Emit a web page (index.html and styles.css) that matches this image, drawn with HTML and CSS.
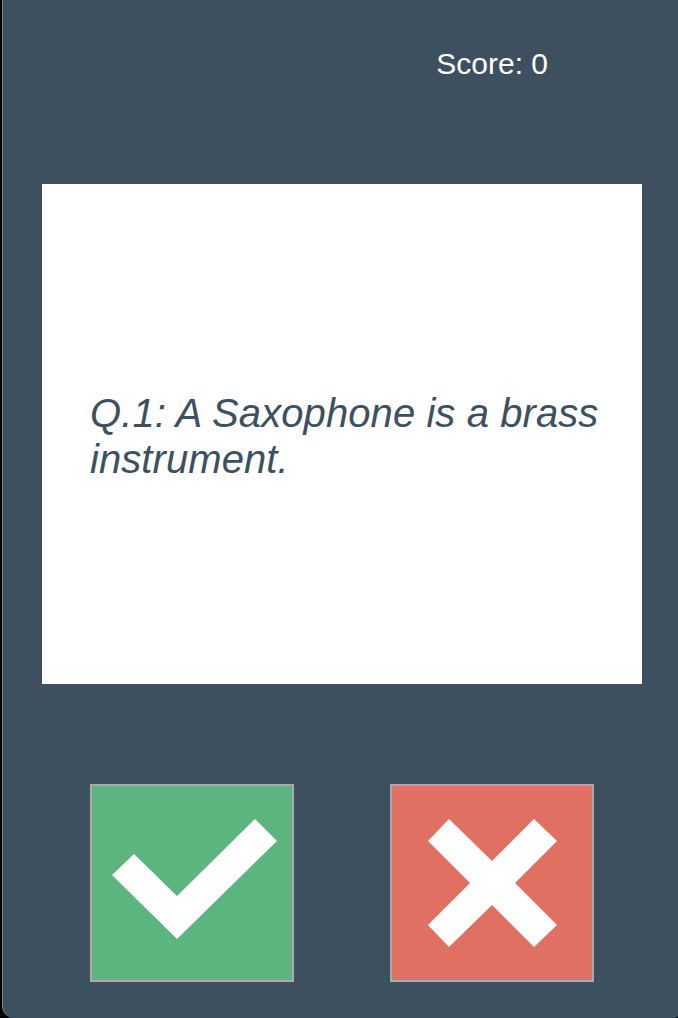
FILE: index.html
```html
<!DOCTYPE html>
<html lang="en">
<head>
<meta charset="utf-8">
<title>Quiz</title>
<link rel="stylesheet" href="styles.css">
</head>
<body>
<main class="panel">
  <header class="header">
    <span class="score">Score: 0</span>
  </header>
  <section class="card">
    <p class="question">Q.1: A Saxophone is a brass instrument.</p>
  </section>
  <div class="answers">
    <button class="answer answer-true" aria-label="True">
      <svg viewBox="0 0 200 194" width="200" height="194"><polygon points="20,89 42,68 85,110 163,33 185,55 85,153" fill="#fff"/></svg>
    </button>
    <button class="answer answer-false" aria-label="False">
      <svg viewBox="0 0 200 194" width="200" height="194"><polygon points="36,55 57,33 100,75 142,33 165,55 123,97 165,139 142,161 100,119 57,161 36,139 78,97" fill="#fff"/></svg>
    </button>
  </div>
</main>
</body>
</html>
```

FILE: styles.css
```css
html, body {
  margin: 0;
  padding: 0;
  background: #000;
  overflow: hidden;
  height: 1018px;
}

.panel {
  box-sizing: border-box;
  margin-left: 2px;
  width: 682px;
  height: 1018px;
  background: #3d5060;
  border-left: 1px solid #74838f;
  border-radius: 0 0 12px 12px;
  font-family: "Liberation Sans", Arial, sans-serif;
}

.header {
  box-sizing: border-box;
  height: 184px;
  padding: 47px 136px 0 0;
  display: flex;
  justify-content: flex-end;
  align-items: flex-start;
}

.score {
  color: #fff;
  font-size: 30px;
}

.card {
  box-sizing: border-box;
  margin-left: 39px;
  width: 600px;
  height: 500px;
  background: #fff;
  display: flex;
  align-items: center;
  padding: 3px 30px 0 48px;
}

.question {
  margin: 0;
  color: #3d5060;
  font-size: 40px;
  font-style: italic;
  letter-spacing: 0.08px;
  line-height: 46px;
}

.answers {
  display: flex;
  gap: 96px;
  padding: 100px 0 0 87px;
}

.answer {
  box-sizing: border-box;
  width: 204px;
  height: 198px;
  padding: 0;
  margin: 0;
  border: 2px solid #a9aaaa;
  display: block;
  cursor: pointer;
}

.answer svg {
  display: block;
}

.answer-true {
  background: #5cb47e;
}

.answer-false {
  background: #e07062;
}
```
